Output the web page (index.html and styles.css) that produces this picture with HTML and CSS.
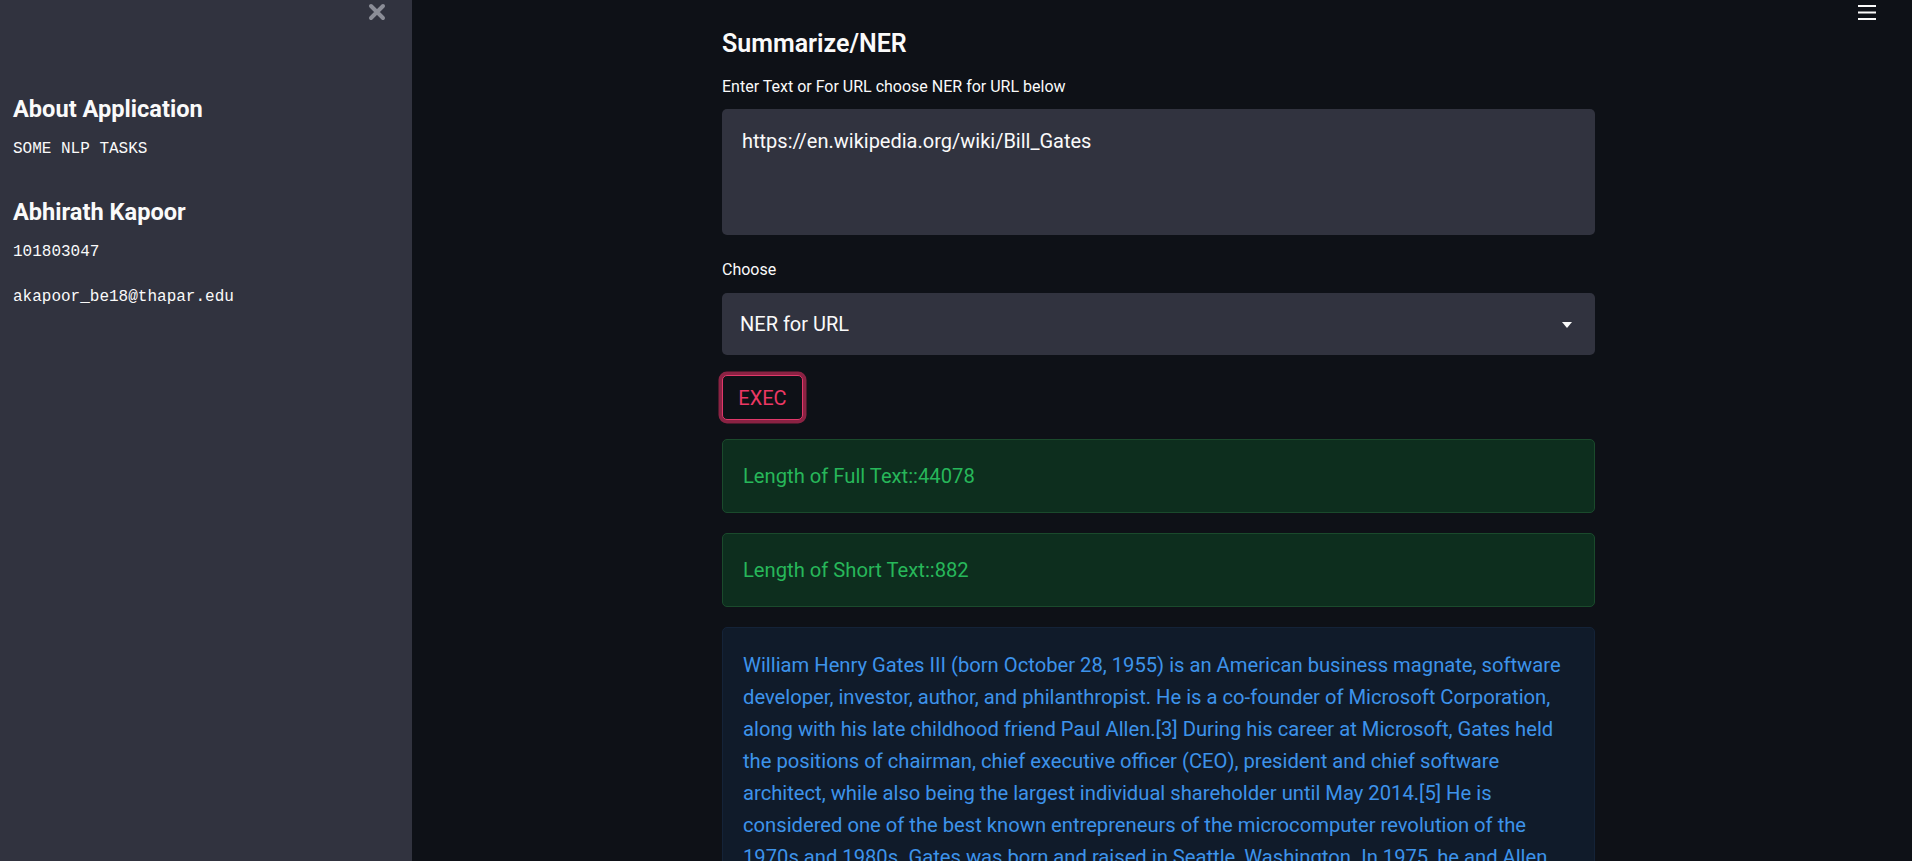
FILE: index.html
```html
<!DOCTYPE html>
<html lang="en">
<head>
<meta charset="utf-8">
<title>Summarize/NER</title>
<link rel="stylesheet" href="styles.css">
</head>
<body>
<aside class="sidebar">
  <button class="close-btn" aria-label="Close sidebar">
    <svg width="18" height="18" viewBox="0 0 18 18"><path d="M3 3 L15 15 M15 3 L3 15" stroke="#8b8d97" stroke-width="4" stroke-linecap="round"/></svg>
  </button>
  <div class="side-content">
    <h2 class="side-title">About Application</h2>
    <p class="mono">SOME NLP TASKS</p>
    <h2 class="side-title second">Abhirath Kapoor</h2>
    <p class="mono">101803047</p>
    <p class="mono">akapoor_be18@thapar.edu</p>
  </div>
</aside>
<main class="main">
  <button class="menu-btn" aria-label="Menu">
    <svg width="18" height="17" viewBox="0 0 18 17"><rect x="0" y="1" width="18" height="2" fill="#fafafa"/><rect x="0" y="7.5" width="18" height="2" fill="#fafafa"/><rect x="0" y="14" width="18" height="2" fill="#fafafa"/></svg>
  </button>
  <div class="block">
    <h3 class="title">Summarize/NER</h3>
    <label class="label">Enter Text or For URL choose NER for URL below</label>
    <div class="textarea">https://en.wikipedia.org/wiki/Bill_Gates</div>
    <label class="label choose">Choose</label>
    <div class="select">
      <span>NER for URL</span>
      <svg class="caret" width="10" height="6" viewBox="0 0 10 6"><path d="M0 0 L10 0 L5 6 Z" fill="#fafafa"/></svg>
    </div>
    <div class="btn-row"><button class="exec">EXEC</button></div>
    <div class="alert success">Length of Full Text::44078</div>
    <div class="alert success">Length of Short Text::882</div>
    <div class="alert info">William Henry Gates III (born October 28, 1955) is an American business magnate, software developer, investor, author, and philanthropist. He is a co-founder of Microsoft Corporation, along with his late childhood friend Paul Allen.[3] During his career at Microsoft, Gates held the positions of chairman, chief executive officer (CEO), president and chief software architect, while also being the largest individual shareholder until May 2014.[5] He is considered one of the best known entrepreneurs of the microcomputer revolution of the 1970s and 1980s. Gates was born and raised in Seattle, Washington. In 1975, he and Allen founded Microsoft in Albuquerque, New Mexico.</div>
  </div>
</main>
</body>
</html>
```
FILE: styles.css
```css
* { box-sizing: border-box; }
html, body { margin: 0; padding: 0; height: 100%; }
body {
  display: flex;
  background: #0e1117;
  color: #fafafa;
  font-family: Roboto, "Noto Sans", sans-serif;
  overflow: hidden;
}
.sidebar {
  position: relative;
  width: 412px;
  flex: 0 0 412px;
  background: #31333f;
  height: 100%;
}
.close-btn {
  position: absolute;
  left: 368px;
  top: 3px;
  border: 0;
  background: none;
  padding: 0;
  width: 18px;
  height: 18px;
}
.side-content { padding: 96px 13px 0 13px; }
.side-title {
  margin: 0;
  font-size: 23.6px;
  line-height: 26px;
  font-weight: 700;
  color: #fafafa;
}
.side-title.second { margin-top: 40px; }
.mono {
  margin: 0;
  font-family: "Liberation Mono", "DejaVu Sans Mono", monospace;
  font-size: 16px;
  line-height: 20px;
  color: #fafafa;
}
.side-title + .mono { margin-top: 17px; }
.mono + .mono { margin-top: 25px; }

.main {
  position: relative;
  flex: 1;
  height: 100%;
  padding-right: 7px;
  display: flex;
  justify-content: center;
}
.menu-btn {
  position: absolute;
  top: 4px;
  right: 36px;
  border: 0;
  background: none;
  padding: 0;
}
.block {
  width: 873px;
  padding-top: 29px;
  display: flex;
  flex-direction: column;
}
.block > * { flex-shrink: 0; }
.title {
  margin: 0;
  font-size: 25px;
  line-height: 30px;
  font-weight: 600;
}
.label {
  margin-top: 18px;
  font-size: 16px;
  line-height: 20px;
  color: #fafafa;
}
.textarea {
  margin-top: 12px;
  height: 126px;
  background: #31333f;
  border-radius: 5px;
  padding: 19px 20px;
  font-size: 20px;
  line-height: 26px;
}
.label.choose { margin-top: 25px; }
.select {
  margin-top: 13px;
  height: 62px;
  background: #31333f;
  border-radius: 5px;
  display: flex;
  align-items: center;
  justify-content: space-between;
  padding: 0 23px 0 18px;
  font-size: 20px;
}
.caret { margin-top: 1px; }
.btn-row { margin-top: 20px; }
.exec {
  width: 81px;
  height: 45px;
  background: #0e1117;
  color: #ec3864;
  border: 1.5px solid #e0386a;
  border-radius: 5px;
  box-shadow: 0 0 0 3.5px rgba(206, 45, 90, 0.65);
  font-family: Roboto, "Noto Sans", sans-serif;
  font-size: 20px;
  padding: 0;
}
.alert {
  border-radius: 5px;
  padding: 21px 20px;
  font-size: 20.2px;
  line-height: 32px;
}
.success {
  margin-top: 19px;
  height: 74px;
  padding-top: 20px;
  padding-bottom: 20px;
  background: #0d2e1e;
  border: 1px solid #1a4a2c;
  color: #27b75a;
}
.success + .success { margin-top: 20px; }
.info {
  margin-top: 20px;
  background: #101b2a;
  border: 1px solid #142338;
  color: #3d93ea;
}
```
